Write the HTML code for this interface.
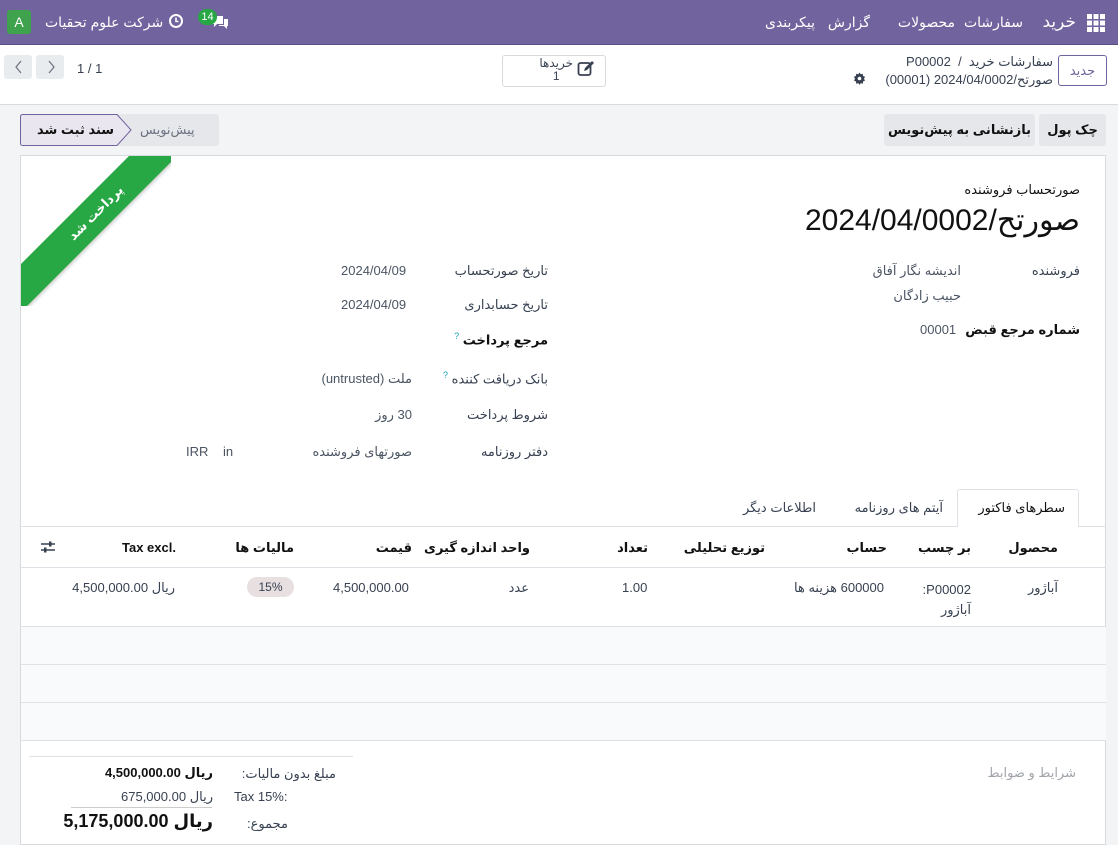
<!DOCTYPE html>
<html><head><meta charset="utf-8">
<style>
*{box-sizing:border-box;margin:0;padding:0}
body{width:1118px;height:832px;overflow:hidden;background:#f3f4f6;font-family:"Liberation Sans","DejaVu Sans",sans-serif;font-size:13px;color:#374151;position:relative}
.a{position:absolute;white-space:nowrap}
.r{direction:rtl}
.nav{position:absolute;left:0;top:0;width:1118px;height:45px;background:#71639e;color:#fff;border-bottom:1px solid #5b4f85}
.cp{position:absolute;left:0;top:45px;width:1118px;height:60px;background:#fff;border-bottom:1px solid #d8dadd}
.btn{position:absolute;border-radius:3px;display:flex;align-items:center;justify-content:center;font-size:13px}
.sheet{position:absolute;left:20px;top:155px;width:1086px;height:690px;background:#fff;border:1px solid #d8dadd}
.val{color:#4b5563}
.bold{font-weight:bold;color:#111}
.hl{position:absolute;left:21px;width:1085px;height:1px;background:#dee2e6}
</style></head><body>
<div class="nav">
  <svg class="a" style="left:1087px;top:14px" width="18" height="18" viewBox="0 0 18 18" fill="#fff"><rect x="0" y="0" width="5" height="5"/><rect x="6.5" y="0" width="5" height="5"/><rect x="13" y="0" width="5" height="5"/><rect x="0" y="6.5" width="5" height="5"/><rect x="6.5" y="6.5" width="5" height="5"/><rect x="13" y="6.5" width="5" height="5"/><rect x="0" y="13" width="5" height="5"/><rect x="6.5" y="13" width="5" height="5"/><rect x="13" y="13" width="5" height="5"/></svg>
  <span class="a r" style="right:42px;top:12px;font-size:17px">خرید</span>
  <span class="a r" style="right:95px;top:14px;font-size:14px">سفارشات</span>
  <span class="a r" style="right:163px;top:14px;font-size:14px">محصولات</span>
  <span class="a r" style="right:248px;top:14px;font-size:14px">گزارش</span>
  <span class="a r" style="right:303px;top:14px;font-size:14px">پیکربندی</span>
  <div class="a" style="left:7px;top:10px;width:24px;height:24px;background:#3fa34d;border-radius:3px;color:#fff;font-size:14px;text-align:center;line-height:24px">A</div>
  <span class="a r" style="left:45px;top:14px;font-size:14px">شرکت علوم تحقیات</span>
  <svg class="a" style="left:168px;top:13px" width="16" height="16" viewBox="0 0 16 16"><circle cx="8" cy="8" r="6" fill="none" stroke="#fff" stroke-width="2"/><path d="M8 4.5V8.5H10.5" stroke="#fff" stroke-width="1.6" fill="none"/></svg>
  <svg class="a" style="left:210px;top:14px" width="20" height="16" viewBox="0 0 20 16"><path d="M2 2h11v8H7l-3 3v-3H2z" fill="#fff"/><path d="M14 5h4v7h-1v3l-3-3H9v-1h5z" fill="#fff"/></svg>
  <div class="a" style="left:198px;top:9px;width:19px;height:16px;background:#28a745;border-radius:8px;color:#fff;font-size:11px;text-align:center;line-height:16px">14</div>
</div>
<div class="cp">
  <div class="btn" style="left:1058px;top:10px;width:49px;height:31px;border:1px solid #71639e;color:#71639e;background:#fff">جدید</div>
  <span class="a r" style="right:65px;top:9px;color:#374151">سفارشات خرید &nbsp;/ &nbsp;P00002</span>
  <span class="a r" style="right:65px;top:27px;color:#374151">صورتح/2024/04/0002 (00001)</span>
  <svg class="a" style="left:853px;top:27px" width="13" height="13" viewBox="0 0 13 13"><path d="M6.5 0.5l1.2 1.8 2.1-.6.2 2.2 2 .9-1 1.9 1 1.9-2 .9-.2 2.2-2.1-.6-1.2 1.8-1.2-1.8-2.1.6-.2-2.2-2-.9 1-1.9-1-1.9 2-.9.2-2.2 2.1.6z" fill="#374151"/><circle cx="6.5" cy="6.5" r="1.8" fill="#fff"/></svg>
  <div class="a" style="left:502px;top:10px;width:104px;height:32px;border:1px solid #d8dadd;border-radius:3px;background:#fff"></div>
  <svg class="a" style="left:577px;top:15px" width="18" height="18" viewBox="0 0 18 18"><rect x="1.5" y="3" width="12" height="12" rx="2" fill="none" stroke="#374151" stroke-width="1.8"/><path d="M7 11l1-3 7-7 2 2-7 7z" fill="#374151"/></svg>
  <span class="a r" style="right:545px;top:12px;font-size:12px;line-height:13px;text-align:center">خریدها<br>1</span>
  <span class="a" style="left:77px;top:16px;font-size:13px">1 / 1</span>
  <div class="a" style="left:4px;top:10px;width:28px;height:24px;background:#e9ecef;border-radius:3px"></div>
  <div class="a" style="left:36px;top:10px;width:28px;height:24px;background:#e9ecef;border-radius:3px"></div>
  <svg class="a" style="left:4px;top:10px" width="60" height="24"><path d="M17 6l-5 6 5 6M45 6l5 6-5 6" fill="none" stroke="#6b7280" stroke-width="1.2"/></svg>
</div>
<div class="btn r" style="left:1039px;top:114px;width:67px;height:32px;background:#e5e7eb;color:#111;font-weight:bold">چک پول</div>
<div class="btn r" style="left:884px;top:114px;width:151px;height:32px;background:#e5e7eb;color:#111;font-weight:bold">بازنشانی به پیش‌نویس</div>
<div class="a" style="left:20px;top:114px;width:199px;height:32px;background:#e5e7eb;border-radius:3px"></div>
<svg class="a" style="left:20px;top:114px" width="112" height="32"><path d="M0.5 2.5a2 2 0 0 1 2-2H97l14 15.5L97 31.5H2.5a2 2 0 0 1-2-2z" fill="#e9e6f0" stroke="#71639e"/></svg>
<span class="a r" style="left:37px;top:122px;font-weight:bold;color:#111">سند ثبت شد</span>
<span class="a r" style="left:140px;top:122px;color:#6b7280">پیش‌نویس</span>
<div class="sheet"></div>
<div class="a" style="left:21px;top:156px;width:150px;height:150px;overflow:hidden">
  <div style="position:absolute;left:-55px;top:40px;width:260px;height:34px;background:#28a745;transform:rotate(-45deg);color:#fff;font-weight:bold;font-size:13px;text-align:center;line-height:34px;direction:rtl;box-shadow:0 2px 3px rgba(0,0,0,.2)">پرداخت شد</div>
</div>
<span class="a r" style="right:38px;top:182px;font-size:13px;color:#111">صورتحساب فروشنده</span>
<span class="a r" style="right:38px;top:203px;font-size:30px;color:#111">صورتح/2024/04/0002</span>
<span class="a r" style="right:38px;top:263px">فروشنده</span>
<span class="a r val" style="right:157px;top:263px">اندیشه نگار آفاق</span>
<span class="a r val" style="right:157px;top:288px">حبیب زادگان</span>
<span class="a r bold" style="right:38px;top:322px">شماره مرجع قبض</span>
<span class="a val" style="left:920px;top:322px">00001</span>
<span class="a r" style="right:570px;top:263px">تاریخ صورتحساب</span>
<span class="a val" style="left:341px;top:263px">2024/04/09</span>
<span class="a r" style="right:570px;top:297px">تاریخ حسابداری</span>
<span class="a val" style="left:341px;top:297px">2024/04/09</span>
<span class="a r bold" style="right:570px;top:331px">مرجع پرداخت <sup style="color:#17a2b8;font-size:9px;font-weight:normal">?</sup></span>
<span class="a r" style="right:570px;top:370px">بانک دریافت کننده <sup style="color:#17a2b8;font-size:9px">?</sup></span>
<span class="a r val" style="right:706px;top:371px">ملت (untrusted)</span>
<span class="a r" style="right:570px;top:407px">شروط پرداخت</span>
<span class="a r val" style="right:706px;top:407px">30 روز</span>
<span class="a r" style="right:570px;top:444px">دفتر روزنامه</span>
<span class="a r val" style="right:706px;top:444px">صورتهای فروشنده</span>
<span class="a val" style="left:223px;top:444px">in</span>
<span class="a val" style="left:186px;top:444px">IRR</span>
<div class="hl" style="top:526px"></div>
<div class="a" style="left:957px;top:489px;width:122px;height:38px;background:#fff;border:1px solid #dee2e6;border-bottom:none;border-radius:3px 3px 0 0"></div>
<span class="a r" style="right:53px;top:500px;color:#111">سطرهای فاکتور</span>
<span class="a r" style="right:175px;top:500px">آیتم های روزنامه</span>
<span class="a r" style="right:302px;top:500px">اطلاعات دیگر</span>
<span class="a r bold" style="right:60px;top:540px">محصول</span>
<span class="a r bold" style="right:147px;top:540px">بر چسب</span>
<span class="a r bold" style="right:231px;top:540px">حساب</span>
<span class="a r bold" style="right:353px;top:540px">توزیع تحلیلی</span>
<span class="a r bold" style="right:470px;top:540px">تعداد</span>
<span class="a r bold" style="right:588px;top:540px">واحد اندازه گیری</span>
<span class="a r bold" style="right:706px;top:540px">قیمت</span>
<span class="a r bold" style="right:824px;top:540px">مالیات ها</span>
<span class="a bold" style="left:122px;top:540px">Tax excl.</span>
<svg class="a" style="left:40px;top:540px" width="16" height="14" viewBox="0 0 16 14"><path d="M1 4h14M1 10h14" stroke="#374151" stroke-width="1.5"/><rect x="9" y="1.5" width="2.5" height="5" fill="#374151"/><rect x="4" y="7.5" width="2.5" height="5" fill="#374151"/></svg>
<div class="hl" style="top:567px"></div>
<span class="a r" style="right:60px;top:580px">آباژور</span>
<span class="a r" style="right:147px;top:580px;line-height:20px;text-align:right">P00002:<br>آباژور</span>
<span class="a r" style="right:234px;top:580px">600000 هزینه ها</span>
<span class="a" style="left:622px;top:580px">1.00</span>
<span class="a r" style="right:589px;top:580px">عدد</span>
<span class="a" style="left:333px;top:580px">4,500,000.00</span>
<div class="a" style="left:247px;top:577px;width:47px;height:20px;background:#e7dfe0;border-radius:10px;font-size:12px;text-align:center;line-height:20px">15%</div>
<span class="a r" style="right:943px;top:580px">ریال 4,500,000.00</span>
<div class="hl" style="top:626px"></div>
<div class="a" style="left:21px;top:627px;width:1085px;height:113px;background:#f9fafb"></div>
<div class="hl" style="top:664px"></div>
<div class="hl" style="top:702px"></div>
<div class="hl" style="top:740px"></div>
<span class="a r" style="right:42px;top:765px;color:#a0a4aa">شرایط و ضوابط</span>
<div class="a" style="left:29px;top:756px;width:324px;height:1px;background:#dee2e6"></div>
<span class="a r" style="right:782px;top:766px">مبلغ بدون مالیات:</span>
<span class="a r" style="right:905px;top:765px;font-weight:bold;color:#111">ریال 4,500,000.00</span>
<span class="a" style="left:234px;top:789px">Tax 15%:</span>
<span class="a r" style="right:905px;top:789px">ریال 675,000.00</span>
<div class="a" style="left:71px;top:807px;width:141px;height:1px;background:#ccc"></div>
<span class="a r" style="right:830px;top:816px">مجموع:</span>
<span class="a r" style="right:905px;top:811px;font-weight:bold;font-size:18px;color:#111">ریال 5,175,000.00</span>
</body></html>
